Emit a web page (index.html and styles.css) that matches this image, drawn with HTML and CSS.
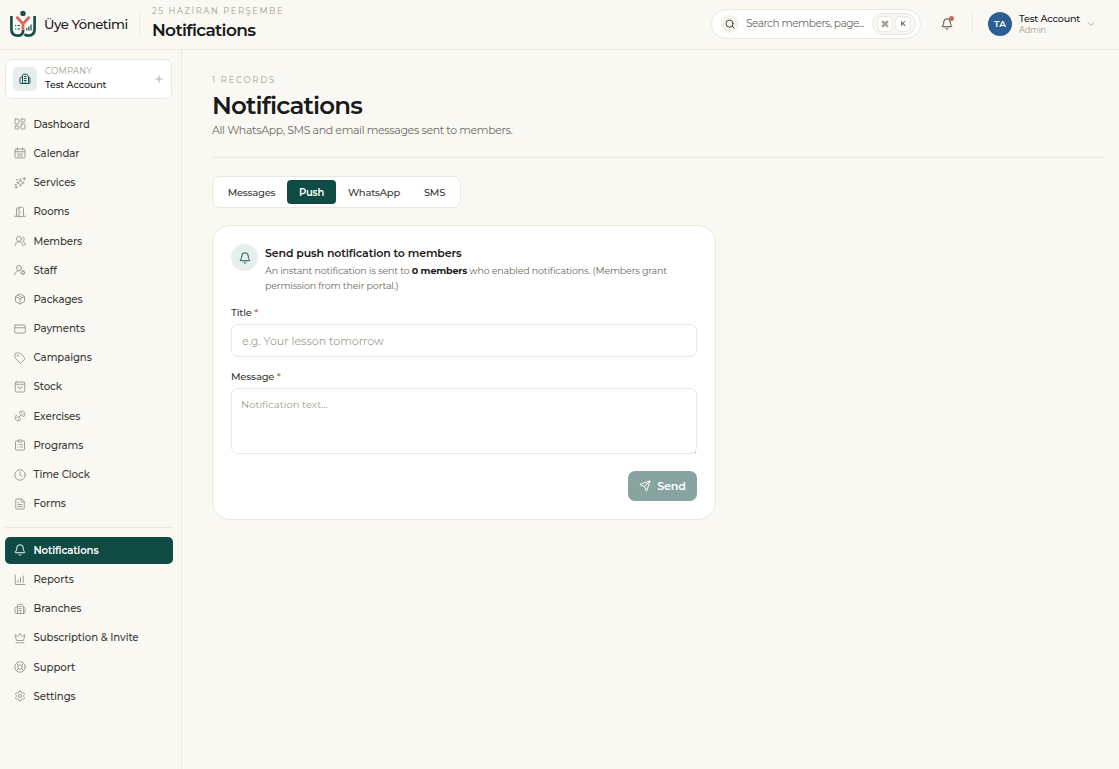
FILE: index.html
```
<!DOCTYPE html>
<html lang="en">
<head>
  <meta charset="UTF-8">
  <meta name="viewport" content="width=device-width, initial-scale=1.0">
  <title>Notifications - Üye Yönetimi</title>
  <link rel="stylesheet" href="styles.css">
</head>
<body>
  <!-- Icon sprite -->
  <svg class="sprite" width="0" height="0">
    <symbol id="i-bell" viewBox="0 0 24 24"><path d="M10 21.5a2.3 2.3 0 0 0 4 0"/><path d="M3 15.5A1 1 0 0 0 4 17.5h16a1 1 0 0 0 1-2C19.41 13.96 18.5 12.5 18.5 8A6.5 6.5 0 0 0 5.500 8c0 4.500-1 5.960-2.500 7.500"/></symbol>
    <symbol id="i-building" viewBox="0 0 24 24"><path d="M7 21V5a2.500 2.500 0 0 1 2.500-2.500h5A2.500 2.500 0 0 1 17 5l2 1.500V21"/><path d="M7 8H5a3 3 0 0 0-3 3v8a2 2 0 0 0 2 2h16a2 2 0 0 0 2-2v-8a3 3 0 0 0-3-3M10.500 7h4M10.500 11h4M10.500 15h4M12.500 18v3"/></symbol>
    <symbol id="i-plus" viewBox="0 0 24 24"><path d="M4 12h16M12 4v16"/></symbol>
    <symbol id="i-search" viewBox="0 0 24 24"><circle cx="11" cy="11" r="8.500"/><path d="m22 22-4.800-4.800"/></symbol>
    <symbol id="i-chevron" viewBox="0 0 24 24"><path d="m4 8 8 8 8-8"/></symbol>
    <symbol id="i-send" viewBox="0 0 24 24"><path d="M14.540 21.690a.5.5 0 0 0 .93-.03l6.500-19a.5.5 0 0 0-.63-.63l-19 6.500a.5.5 0 0 0-.03.93l7.930 3.180a2 2 0 0 1 1.110 1.110zM21.850 2.150l-10.940 10.940"/></symbol>
    <symbol id="i-command" viewBox="0 0 24 24"><path d="M15 6v12a3 3 0 1 0 3-3H6a3 3 0 1 0 3 3V6a3 3 0 1 0-3 3h12a3 3 0 1 0-3-3"/></symbol>
    <symbol id="i-dashboard" viewBox="0 0 24 24"><rect x="2" y="2" width="8" height="10" rx="1.500"/><rect x="14" y="2" width="8" height="6" rx="1.500"/><rect x="14" y="12" width="8" height="10" rx="1.500"/><rect x="2" y="16" width="8" height="6" rx="1.500"/></symbol>
    <symbol id="i-calendar" viewBox="0 0 24 24"><rect x="2" y="4" width="20" height="18" rx="2"/><path d="M7 2v4M17 2v4M2 9.500h20M7 14h10M7 18h10"/></symbol>
    <symbol id="i-sparkles" viewBox="0 0 24 24"><path d="M13 4l2 5.500 5.500 2-5.500 2-2 5.500-2-5.500-5.500-2 5.500-2ZM20.500 1v5M18 3.500h5M5 5.500h3M2 15h3"/><circle cx="4" cy="20" r="2"/></symbol>
    <symbol id="i-door" viewBox="0 0 24 24"><path d="M10 20.500H1M10 4v17a1 1 0 0 0 1.240.97L19 20.500V5a2 2 0 0 0-1.520-1.940l-5-1A2 2 0 0 0 10 4ZM10 4H7a2 2 0 0 0-2 2v14M13.500 12h.01M23 20.500h-4"/></symbol>
    <symbol id="i-users" viewBox="0 0 24 24"><path d="M18 21.500a8 8 0 0 0-16 0"/><circle cx="10" cy="8" r="5"/><path d="M22.500 20.500c0-3.370-2-6.500-4.500-8a5 5 0 0 0-.45-8.800"/></symbol>
    <symbol id="i-staff" viewBox="0 0 24 24"><path d="M1.500 21.500a8 8 0 0 1 9.500-8"/><circle cx="10" cy="8" r="5"/><circle cx="18" cy="17" r="3"/><path d="M18 12.500V14M18 20v1.500M13.500 17H15M21 17h1.500M14.800 13.800l1.100 1.100M20.100 19.100l1.100 1.100M14.800 20.200l1.100-1.100M20.100 14.900l1.100-1.100"/></symbol>
    <symbol id="i-package" viewBox="0 0 24 24"><path d="M11 21.730a2 2 0 0 0 2 0l7-4A2 2 0 0 0 21 16V8a2 2 0 0 0-1-1.730l-7-4a2 2 0 0 0-2 0l-7 4A2 2 0 0 0 3 8v8a2 2 0 0 0 1 1.730zM12 22V12M3.300 7 12 12l8.700-5M7.500 4.270l9 5.150"/></symbol>
    <symbol id="i-card" viewBox="0 0 24 24"><rect x="1.500" y="4" width="21" height="16" rx="2"/><path d="M1.500 9.500h21"/></symbol>
    <symbol id="i-tag" viewBox="0 0 24 24"><path d="M12.590 2.590A2 2 0 0 0 11.170 2H4a2 2 0 0 0-2 2v7.170a2 2 0 0 0 .59 1.420l8.700 8.700a2.430 2.430 0 0 0 3.420 0l6.580-6.580a2.430 2.430 0 0 0 0-3.420z"/><circle cx="7.500" cy="7.500" r=".7"/></symbol>
    <symbol id="i-bag" viewBox="0 0 24 24"><rect x="2.500" y="2" width="19" height="20" rx="2"/><path d="M2.500 6.500h19M16 11a4 4 0 0 1-8 0"/></symbol>
    <symbol id="i-dumbbell" viewBox="0 0 24 24"><g transform="matrix(-1 0 0 1 24 0)"><path d="M14.400 14.400 9.600 9.600M18.657 21.485a2 2 0 1 1-2.829-2.828l-1.767 1.768a2 2 0 1 1-2.829-2.829l6.364-6.364a2 2 0 1 1 2.829 2.829l-1.768 1.767a2 2 0 1 1 2.828 2.829zM6.404 12.768a2 2 0 1 1-2.829-2.829l1.768-1.767a2 2 0 1 1-2.828-2.829l2.828-2.828a2 2 0 1 1 2.829 2.828l1.767-1.768a2 2 0 1 1 2.829 2.829z"/></g></symbol>
    <symbol id="i-clipboard" viewBox="0 0 24 24"><rect x="8" y="2" width="8" height="4" rx="1"/><path d="M16 4h3a2 2 0 0 1 2 2v14a2 2 0 0 1-2 2H5a2 2 0 0 1-2-2V6a2 2 0 0 1 2-2h3M12 11h5M12 16h5M7.500 11h.01M7.500 16h.01"/></symbol>
    <symbol id="i-clock" viewBox="0 0 24 24"><circle cx="12" cy="12" r="10.500"/><path d="M12 6v6l4 2.500"/></symbol>
    <symbol id="i-file" viewBox="0 0 24 24"><path d="M15 2H5.500a2 2 0 0 0-2 2v16a2 2 0 0 0 2 2h13a2 2 0 0 0 2-2V7ZM14 2v4a2 2 0 0 0 2 2h4M10 9H8M16 13H8M16 17H8"/></symbol>
    <symbol id="i-chart" viewBox="0 0 24 24"><path d="M2.500 2v18a1 1 0 0 0 1 1H22M8 17v-4M13 17V7M18.500 17V4"/></symbol>
    <symbol id="i-crown" viewBox="0 0 24 24"><path d="M11.560 3.270a.5.5 0 0 1 .88 0l2.950 5.600a1 1 0 0 0 1.520.3L21.180 5.500a.5.5 0 0 1 .8.52l-2.840 10.250a1 1 0 0 1-.95.73H5.810a1 1 0 0 1-.96-.73L2.020 6.020a.5.5 0 0 1 .8-.52l4.280 3.670a1 1 0 0 0 1.520-.3ZM4 21.500h16"/></symbol>
    <symbol id="i-support" viewBox="0 0 24 24"><circle cx="12" cy="12" r="10.500"/><circle cx="12" cy="12" r="4.500"/><path d="m4.930 4.930 4.240 4.240M14.830 9.170l4.240-4.240M14.830 14.830l4.240 4.240M9.170 14.830l-4.240 4.240"/></symbol>
    <symbol id="i-settings" viewBox="0 0 24 24"><path d="M12.220 2h-.44a2 2 0 0 0-2 2v.18a2 2 0 0 1-1 1.730l-.43.25a2 2 0 0 1-2 0l-.15-.08a2 2 0 0 0-2.730.73l-.22.38a2 2 0 0 0 .73 2.730l.15.1a2 2 0 0 1 1 1.720v.51a2 2 0 0 1-1 1.740l-.15.09a2 2 0 0 0-.73 2.730l.22.38a2 2 0 0 0 2.730.73l.15-.08a2 2 0 0 1 2 0l.43.25a2 2 0 0 1 1 1.730V20a2 2 0 0 0 2 2h.44a2 2 0 0 0 2-2v-.18a2 2 0 0 1 1-1.730l.43-.25a2 2 0 0 1 2 0l.15.08a2 2 0 0 0 2.730-.73l.22-.39a2 2 0 0 0-.73-2.730l-.15-.08a2 2 0 0 1-1-1.740v-.5a2 2 0 0 1 1-1.740l.15-.09a2 2 0 0 0 .73-2.730l-.22-.38a2 2 0 0 0-2.730-.73l-.15.08a2 2 0 0 1-2 0l-.43-.25a2 2 0 0 1-1-1.730V4a2 2 0 0 0-2-2z"/><circle cx="12" cy="12" r="3"/></symbol>
  </svg>

  <header class="topbar">
    <div class="brand">
      <svg class="logo" viewBox="0 0 28 28">
        <circle cx="14" cy="3.400" r="2.700" fill="#15504b"/>
        <path d="M2.400 6v13Q2.400 25.700 9 25.700q5.200 0 5.200-6" fill="none" stroke="#15504b" stroke-width="2.700"/>
        <path d="M25.600 6v13q0 6.700-6.600 6.700-2.200 0-3.400-1.600" fill="none" stroke="#15504b" stroke-width="2.700"/>
        <path d="M7.500 6.800 14 14l6.500-7.200M14 13.500v6.300" fill="none" stroke="#dc6858" stroke-width="2.800"/>
        <path d="M6 15.500h1.200M8.500 15.500h2.500M6 19h1.200M8.500 19h2.500M17.800 20.500v-2.500M19.900 20.500v-4M22 20.500v-6" fill="none" stroke="#15504b" stroke-width="1.200"/>
      </svg>
      <span class="brand-name">Üye Yönetimi</span>
    </div>
    <div class="page-info">
      <div class="date">25 HAZİRAN PERŞEMBE</div>
      <div class="page-name">Notifications</div>
    </div>
    <div class="search">
      <span class="search-icon"><svg class="icon"><use href="#i-search"/></svg></span>
      <span class="search-text">Search members, page...</span>
      <span class="keys"><kbd><svg class="icon"><use href="#i-command"/></svg></kbd><kbd>K</kbd></span>
    </div>
    <div class="bell"><svg class="icon"><use href="#i-bell"/></svg><span class="dot"></span></div>
    <div class="user">
      <span class="avatar">TA</span>
      <div class="user-info">
        <div class="user-name">Test Account</div>
        <div class="user-role">Admin</div>
      </div>
      <svg class="icon chevron"><use href="#i-chevron"/></svg>
    </div>
  </header>

  <div class="layout">
    <aside class="sidebar">
      <div class="company">
        <span class="company-icon"><svg class="icon"><use href="#i-building"/></svg></span>
        <div class="company-info">
          <div class="company-label">COMPANY</div>
          <div class="company-name">Test Account</div>
        </div>
        <svg class="icon plus"><use href="#i-plus"/></svg>
      </div>
      <nav class="nav">
        <a><svg class="icon"><use href="#i-dashboard"/></svg><span>Dashboard</span></a>
        <a><svg class="icon"><use href="#i-calendar"/></svg><span>Calendar</span></a>
        <a><svg class="icon"><use href="#i-sparkles"/></svg><span>Services</span></a>
        <a><svg class="icon"><use href="#i-door"/></svg><span>Rooms</span></a>
        <a><svg class="icon"><use href="#i-users"/></svg><span>Members</span></a>
        <a><svg class="icon"><use href="#i-staff"/></svg><span>Staff</span></a>
        <a><svg class="icon"><use href="#i-package"/></svg><span>Packages</span></a>
        <a><svg class="icon"><use href="#i-card"/></svg><span>Payments</span></a>
        <a><svg class="icon"><use href="#i-tag"/></svg><span>Campaigns</span></a>
        <a><svg class="icon"><use href="#i-bag"/></svg><span>Stock</span></a>
        <a><svg class="icon"><use href="#i-dumbbell"/></svg><span>Exercises</span></a>
        <a><svg class="icon"><use href="#i-clipboard"/></svg><span>Programs</span></a>
        <a><svg class="icon"><use href="#i-clock"/></svg><span>Time Clock</span></a>
        <a><svg class="icon"><use href="#i-file"/></svg><span>Forms</span></a>
      </nav>
      <nav class="nav nav-bottom">
        <a class="active"><svg class="icon"><use href="#i-bell"/></svg><span>Notifications</span></a>
        <a><svg class="icon"><use href="#i-chart"/></svg><span>Reports</span></a>
        <a><svg class="icon"><use href="#i-building"/></svg><span>Branches</span></a>
        <a><svg class="icon"><use href="#i-crown"/></svg><span>Subscription &amp; Invite</span></a>
        <a><svg class="icon"><use href="#i-support"/></svg><span>Support</span></a>
        <a><svg class="icon"><use href="#i-settings"/></svg><span>Settings</span></a>
      </nav>
    </aside>

    <main class="content">
      <div class="page-header">
        <div class="records">1 RECORDS</div>
        <h1>Notifications</h1>
        <p class="subtitle">All WhatsApp, SMS and email messages sent to members.</p>
      </div>

      <div class="tabs">
        <span class="tab tab-messages">Messages</span>
        <span class="tab tab-push active">Push</span>
        <span class="tab tab-whatsapp">WhatsApp</span>
        <span class="tab tab-sms">SMS</span>
      </div>

      <form class="card">
        <div class="card-head">
          <span class="card-icon"><svg class="icon"><use href="#i-bell"/></svg></span>
          <div>
            <h2>Send push notification to members</h2>
            <p class="card-text">An instant notification is sent to <b>0 members</b> who enabled notifications. (Members grant<br>permission from their portal.)</p>
          </div>
        </div>
        <label for="title">Title <i>*</i></label>
        <input id="title" type="text" placeholder="e.g. Your lesson tomorrow">
        <label for="message">Message <i>*</i></label>
        <textarea id="message" placeholder="Notification text..."></textarea>
        <div class="card-foot">
          <button type="button" class="send" disabled><svg class="icon"><use href="#i-send"/></svg><span>Send</span></button>
        </div>
      </form>
    </main>
  </div>
</body>
</html>
```
FILE: styles.css
```
* {
  box-sizing: border-box;
}
body {
  margin: 0;
  height: 769px;
  display: flex;
  flex-direction: column;
  overflow: hidden;
  background: #faf8f3;
  color: #1a1a1a;
  font-family: Montserrat, Inter, "Liberation Sans", sans-serif;
  font-size: 11px;
}
h1, h2, p {
  margin: 0;
}
.sprite {
  display: none;
}
.icon {
  width: 12px;
  height: 12px;
  flex: none;
  fill: none;
  stroke: currentColor;
  stroke-width: 1.9;
  stroke-linecap: round;
  stroke-linejoin: round;
}

/* Top bar */
.topbar {
  display: flex;
  align-items: center;
  height: 50px;
  flex: none;
  padding: 0 24px 2px 9px;
  border-bottom: 1px solid #ece8e0;
}
.brand {
  display: flex;
  align-items: center;
  width: 131px;
  height: 20px;
  border-right: 1px solid #ece8e0;
}
.logo {
  width: 28px;
  height: 28px;
  flex: none;
}
.brand-name {
  margin-left: 7px;
  font-size: 13.2px;
  font-weight: 500;
  letter-spacing: -0.45px;
  white-space: nowrap;
}
.page-info {
  margin-left: 12px;
  margin-top: -1px;
}
.date {
  font-size: 8.4px;
  line-height: 12px;
  letter-spacing: 1.6px;
  color: #a39e92;
  white-space: nowrap;
}
.page-name {
  margin-top: 2px;
  font-size: 17px;
  line-height: 22px;
  font-weight: 600;
  letter-spacing: -0.65px;
}
.search {
  display: flex;
  align-items: center;
  width: 210px;
  height: 30px;
  margin-left: auto;
  padding: 0 4px 0 9px;
  border: 1px solid #ece8e0;
  border-radius: 15px;
  background: #fff;
}
.search-icon {
  display: flex;
  align-items: center;
  justify-content: center;
  flex: none;
  width: 18px;
  height: 18px;
  border-radius: 50%;
  background: #f5f1ea;
  color: #3d3a36;
}
.search-icon .icon {
  width: 10px;
  height: 10px;
  stroke-width: 2.2;
}
.search-text {
  margin-left: 7px;
  font-size: 10.6px;
  letter-spacing: -0.5px;
  color: #6f6a63;
  white-space: nowrap;
}
.keys {
  display: flex;
  align-items: center;
  gap: 2px;
  height: 22px;
  margin-left: auto;
  padding: 0 4px;
  border: 1px solid #ece8e0;
  border-radius: 11px;
  background: #faf8f3;
}
kbd {
  display: flex;
  align-items: center;
  justify-content: center;
  width: 16px;
  height: 16px;
  border: 1px solid #ece8e0;
  border-radius: 5px;
  background: #fff;
  color: #5c5750;
  font: 600 7px Montserrat, Inter, sans-serif;
}
kbd .icon {
  width: 8px;
  height: 8px;
}
.bell {
  position: relative;
  display: flex;
  align-items: center;
  width: 52px;
  height: 19px;
  padding-left: 20px;
  border-right: 1px solid #ece8e0;
  color: #3d3a36;
}
.bell .dot {
  position: absolute;
  top: 2px;
  right: 18px;
  width: 5px;
  height: 5px;
  border-radius: 50%;
  background: #c96a55;
}
.user {
  display: flex;
  align-items: center;
  margin-left: 15px;
}
.avatar {
  width: 24px;
  height: 24px;
  border-radius: 50%;
  background: #2b5f92;
  color: #fff;
  font-size: 9px;
  line-height: 24px;
  font-weight: 600;
  text-align: center;
}
.user-info {
  width: 68px;
  margin-left: 7px;
  margin-top: 2px;
  white-space: nowrap;
}
.user-name {
  font-size: 9.6px;
  line-height: 12px;
  font-weight: 500;
  letter-spacing: -0.17px;
}
.user-role {
  font-size: 8.4px;
  line-height: 11px;
  letter-spacing: -0.3px;
  color: #a39e92;
}
.chevron {
  width: 8px;
  height: 8px;
  color: #a39e92;
  stroke-width: 2.5;
}

/* Sidebar */
.layout {
  display: flex;
  flex: 1;
}
.sidebar {
  width: 182px;
  flex: none;
  padding: 9px 9px 0 5px;
  border-right: 1px solid #ece8e0;
}
.company {
  display: flex;
  align-items: center;
  height: 40px;
  margin-bottom: 11.5px;
  padding: 0 7px 1px 7px;
  border: 1px solid #ece8e0;
  border-radius: 7px;
  background: #fff;
}
.company-icon {
  display: flex;
  align-items: center;
  justify-content: center;
  width: 24px;
  height: 24px;
  border-radius: 5px;
  background: #e7efed;
  color: #0f4a43;
}
.company-info {
  margin-left: 8px;
}
.company-label {
  font-size: 8.5px;
  line-height: 13px;
  letter-spacing: 0.3px;
  color: #a39e92;
}
.company-name {
  font-size: 9.6px;
  line-height: 14px;
  font-weight: 500;
  letter-spacing: -0.15px;
}
.plus {
  width: 10px;
  height: 10px;
  margin-left: auto;
  color: #a39e92;
}
.nav {
  display: flex;
  flex-direction: column;
  gap: 1.6px;
}
.nav a {
  display: flex;
  align-items: center;
  gap: 7.5px;
  height: 27.6px;
  padding-left: 9px;
  border-radius: 5px;
  color: #3d3a36;
  font-size: 10.2px;
  font-weight: 500;
  letter-spacing: -0.08px;
}
.nav a .icon {
  color: #a0988b;
}
.nav-bottom {
  width: 167.5px;
  margin-top: 9px;
  padding-top: 9px;
  border-top: 1px solid #ece8e0;
}
.nav a.active {
  background: #0f4a43;
  color: #fff;
  font-weight: 600;
  letter-spacing: -0.15px;
}
.nav a.active .icon {
  color: #fff;
}

/* Content */
.content {
  flex: 1;
  padding: 24px 15px 0 30px;
}
.page-header {
  height: 84px;
  border-bottom: 1px solid #ece8e0;
}
.records {
  font-size: 8.4px;
  line-height: 13px;
  letter-spacing: 1.8px;
  color: #a39e92;
}
h1 {
  margin-top: 2px;
  font-size: 24.5px;
  line-height: 32px;
  font-weight: 600;
  letter-spacing: -0.85px;
}
.subtitle {
  margin-top: 1px;
  line-height: 16px;
  letter-spacing: -0.37px;
  color: #6f6a63;
}
.tabs {
  display: flex;
  align-items: center;
  width: 249px;
  height: 32px;
  margin-top: 18px;
  padding: 3px;
  border: 1px solid #ece8e0;
  border-radius: 8px;
  background: #fff;
}
.tab {
  height: 24px;
  border-radius: 4px;
  font-size: 10px;
  line-height: 25px;
  font-weight: 500;
  letter-spacing: -0.25px;
  text-align: center;
  color: #3d3a36;
}
.tab-messages {
  width: 71px;
}
.tab-push {
  width: 49px;
}
.tab-whatsapp {
  width: 76px;
}
.tab-sms {
  width: 45px;
}
.tab.active {
  background: #0f4a43;
  color: #fff;
  font-weight: 600;
}
.card {
  width: 504px;
  height: 295px;
  margin-top: 17px;
  padding: 18px;
  border: 1px solid #ece8e0;
  border-radius: 18px;
  background: #fff;
}
.card-head {
  display: flex;
  gap: 7px;
  height: 61px;
}
.card-icon {
  display: flex;
  align-items: center;
  justify-content: center;
  flex: none;
  width: 27px;
  height: 27px;
  border-radius: 50%;
  background: #e7efed;
  color: #0f4a43;
}
h2 {
  margin-top: 1px;
  font-size: 11px;
  line-height: 16px;
  font-weight: 600;
  letter-spacing: -0.13px;
}
.card-text {
  margin-top: 2px;
  font-size: 9.5px;
  line-height: 15px;
  letter-spacing: -0.18px;
  color: #6f6a63;
  white-space: nowrap;
}
.card-text b {
  color: #1a1a1a;
  font-weight: 700;
}
label {
  display: block;
  font-size: 10px;
  line-height: 16px;
  font-weight: 500;
  letter-spacing: -0.2px;
  color: #3d3a36;
}
label i {
  color: #c96a55;
  font-style: normal;
}
input,
textarea {
  display: block;
  width: 466px;
  border: 1px solid #ece8e0;
  border-radius: 7px;
  background: #fff;
  font-family: inherit;
  outline: none;
}
input {
  height: 33px;
  margin: 3px 0 12px;
  padding: 0 10px;
  font-size: 11px;
}
textarea {
  height: 66px;
  margin-top: 3px;
  padding: 8px 9px;
  font-size: 10px;
  line-height: 16px;
}
textarea::-webkit-resizer {
  background: linear-gradient(#8a8a8a, #8a8a8a) right bottom / 1px 1px no-repeat;
}
input::placeholder,
textarea::placeholder {
  color: #a39e92;
}
.card-foot {
  display: flex;
  justify-content: flex-end;
  margin-top: 17px;
}
.send {
  display: flex;
  align-items: center;
  justify-content: center;
  gap: 6px;
  width: 69px;
  height: 30px;
  padding: 0;
  border: 0;
  border-radius: 7px;
  background: #87a4a1;
  color: #fff;
  font-family: inherit;
  font-size: 11.2px;
  font-weight: 600;
  letter-spacing: -0.25px;
}
```
